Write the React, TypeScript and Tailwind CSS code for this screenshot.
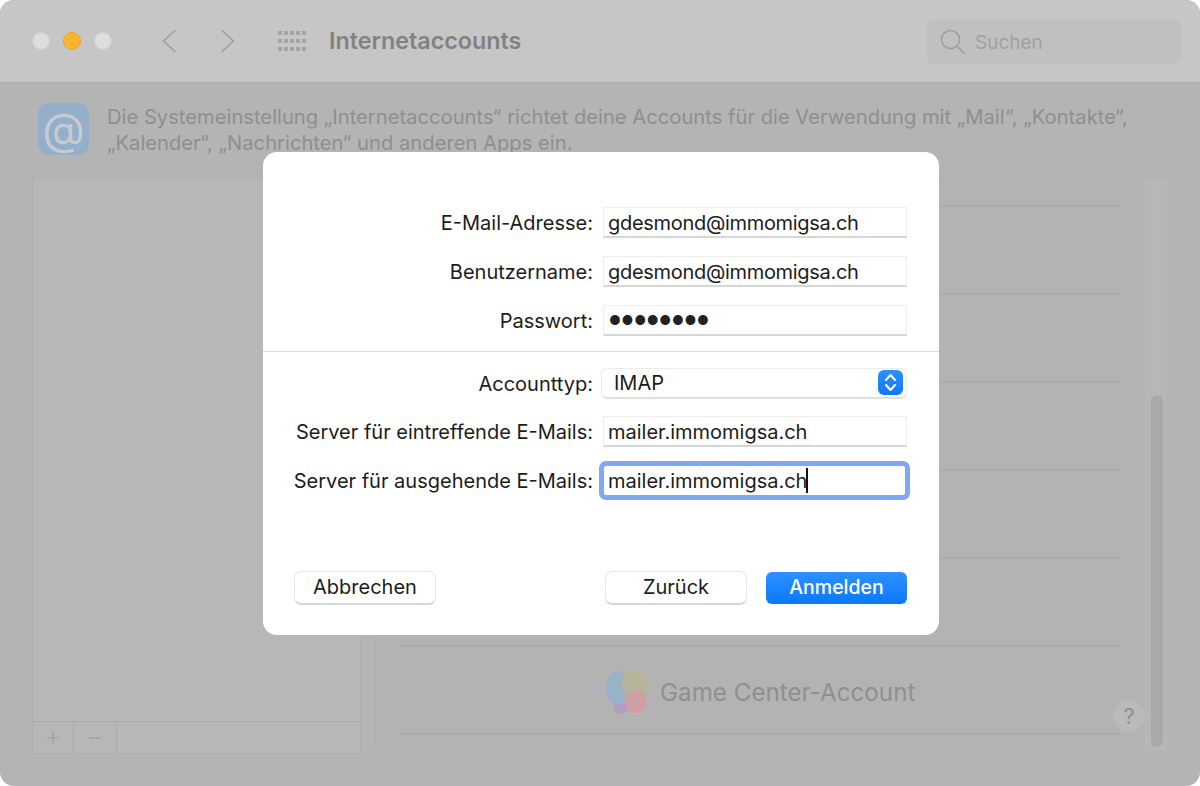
const FONT = "font-['Inter','Liberation_Sans',sans-serif]";

function TrafficLight({ color }: { color: string }) {
  return <span className={`w-[18px] h-[18px] rounded-full ${color}`} />;
}

function AppGrid() {
  return (
    <div className="grid grid-cols-5 gap-x-[2.2px] gap-y-[4px] w-[28px]">
      {Array.from({ length: 15 }).map((_, i) => (
        <span key={i} className="w-[3.8px] h-[4px] bg-[#a4a4a4]" />
      ))}
    </div>
  );
}

function TextField({ value, children, tight }: { value?: string; children?: React.ReactNode; tight?: boolean }) {
  return (
    <div className={`w-[304px] h-[31px] bg-white border border-[#eeeeee] border-b-2 border-b-[#d6d6d6] pl-[4px] pt-[1px] flex items-center text-[20px] text-[#1c1c1c] whitespace-nowrap ${tight ? "tracking-[-0.3px]" : ""}`}>
      {value}
      {children}
    </div>
  );
}

function Row({ label, children, className }: { label: string; children: React.ReactNode; className?: string }) {
  return (
    <div className={`flex items-center h-[31px] ${className ?? ""}`}>
      <label className="w-[340px] shrink-0 pr-[10px] pt-[1px] text-right text-[20px] text-[#1c1c1c] whitespace-nowrap">{label}</label>
      {children}
    </div>
  );
}

function DialogButton({ label, width, primary }: { label: string; width: string; primary?: boolean }) {
  return (
    <button
      className={
        primary
          ? `${width} h-[32px] rounded-[6px] bg-gradient-to-b from-[#2b91ff] to-[#0a78fb] text-white text-[19.5px] font-medium`
          : `${width} h-[34px] rounded-[7px] bg-white border border-[#e6e6e6] border-b-2 border-b-[#d6d6d6] text-[#1c1c1c] text-[20px] pb-[2px]`
      }
    >
      {label}
    </button>
  );
}

export default function App() {
  return (
    <div className={`relative w-[1200px] h-[786px] bg-white overflow-hidden ${FONT}`}>
      <div className="w-full h-full rounded-[14px] overflow-hidden bg-[#b4b4b4] flex flex-col">
        {/* Title bar */}
        <div className="h-[83px] shrink-0 bg-[#c6c6c6] border-b border-[#a9a9a9] flex items-center pl-[32px] pr-[19px]">
          <div className="flex items-center gap-[13px]">
            <TrafficLight color="bg-[#dedede] border border-[#cfcfcf]" />
            <TrafficLight color="bg-[#fdb42a] border border-[#e8a52a]" />
            <TrafficLight color="bg-[#dedede] border border-[#cfcfcf]" />
          </div>
          <svg className="ml-[49px] w-[16px] h-[24px]" viewBox="0 0 16 24" fill="none" stroke="#9f9f9f" strokeWidth="1.6" strokeLinecap="round" strokeLinejoin="round">
            <path d="M14 1.5L2.5 12L14 22.5" />
          </svg>
          <svg className="ml-[43px] w-[16px] h-[24px]" viewBox="0 0 16 24" fill="none" stroke="#9f9f9f" strokeWidth="1.6" strokeLinecap="round" strokeLinejoin="round">
            <path d="M2 1.5L13.5 12L2 22.5" />
          </svg>
          <div className="ml-[42px]"><AppGrid /></div>
          <span className="ml-[23px] text-[23.3px] font-semibold text-[#828282]">Internetaccounts</span>
          <div className="ml-auto w-[254px] h-[45px] rounded-[8px] bg-[#c0c0c0] flex items-center pl-[13px] gap-[10px]">
            <svg className="w-[25px] h-[25px] shrink-0" viewBox="0 0 25 25" fill="none" stroke="#9e9e9e" strokeWidth="1.5" strokeLinecap="round">
              <circle cx="10.5" cy="10.5" r="9" />
              <path d="M17 17l7 7" />
            </svg>
            <span className="text-[19px] text-[#a0a0a0] pt-[5px]">Suchen</span>
          </div>
        </div>

        {/* Intro */}
        <div className="flex pl-[38px] pt-[20px] h-[94px] shrink-0">
          <div className="w-[51px] h-[52px] rounded-[11px] bg-[#95aec9] flex items-center justify-center text-[#c6cbd0] text-[44px] leading-none shrink-0">
            @
          </div>
          <p className="ml-[18px] mt-[1px] w-[1050px] text-[20.2px] leading-[26px] text-[#8f8f8f]">
            Die Systemeinstellung „Internetaccounts“ richtet deine Accounts für die Verwendung mit „Mail“, „Kontakte“, „Kalender“, „Nachrichten“ und anderen Apps ein.
          </p>
        </div>

        {/* Panels */}
        <div className="flex pl-[32px]">
          <div className="w-[329px] h-[577px] bg-[#b7b7b7] border border-[#aeaeae] flex flex-col">
            <div className="flex-1" />
            <div className="h-[32px] border-t border-[#a9a9a9] flex items-center text-[#a4a4a4]">
              <div className="w-[41px] h-full border-r border-[#a9a9a9] flex items-center justify-center text-[26px] font-light leading-none pb-[3px]">+</div>
              <div className="w-[43px] h-full border-r border-[#a9a9a9] flex items-center justify-center text-[26px] font-light leading-none pb-[3px]">−</div>
            </div>
          </div>

          <div className="ml-[14px] w-[792px] h-[573px] border-t border-l border-[#aeaeae] bg-[#b3b3b3] flex">
            <div className="relative w-[769px] pl-[24px]">
              <div className="h-[29px] border-b-2 border-[#acacac] w-[720px]" />
              {[0, 1, 2, 3, 4].map((i) => (
                <div key={i} className="h-[88px] border-b-2 border-[#acacac] w-[720px]" />
              ))}
              <div className="h-[88px] border-b-2 border-[#acacac] w-[720px] flex items-center pl-[205px] pt-[6px]">
                <svg className="w-[44px] h-[46px] shrink-0" viewBox="0 0 44 46">
                  <ellipse cx="16.5" cy="37" rx="7.5" ry="7" fill="#b09dc0" />
                  <ellipse cx="12.5" cy="18" rx="12" ry="17" fill="#98b3c8" />
                  <ellipse cx="29" cy="14" rx="13" ry="14" fill="#b8b48e" opacity="0.75" />
                  <ellipse cx="31" cy="31.5" rx="11" ry="11.5" fill="#cfa0a3" />
                </svg>
                <span className="ml-[11px] text-[24.2px] text-[#8f8f8f] whitespace-nowrap">Game Center-Account</span>
              </div>
              <div className="absolute left-[737px] top-[522px] w-[32px] h-[32px] rounded-full bg-[#bababa] flex items-center justify-center text-[22px] text-[#8f8f8f]">
                ?
              </div>
            </div>
            <div className="w-[22px] h-[572px] bg-[#b7b7b7] flex flex-col justify-end items-center pb-[3px] pl-[2px]">
              <div className="w-[12px] h-[352px] rounded-full bg-[#a9a9a9]" />
            </div>
          </div>
        </div>
      </div>

      {/* Modal sheet */}
      <div className="absolute left-[263px] top-[152px] w-[676px] h-[483px] bg-white rounded-[14px] flex flex-col pt-[55px]">
        <div className="flex flex-col gap-[18px]">
          <Row label="E-Mail-Adresse:"><TextField value="gdesmond@immomigsa.ch" tight /></Row>
          <Row label="Benutzername:"><TextField value="gdesmond@immomigsa.ch" tight /></Row>
          <Row label="Passwort:">
            <TextField>
              <span className="text-[13px] tracking-[0.7px] text-[#222] leading-none pl-[1px] -mt-[1px]">●●●●●●●●</span>
            </TextField>
          </Row>
        </div>
        <div className="mt-[15px] border-t border-[#dcdcdc]" />
        <div className="mt-[16px]">
          <Row label="Accounttyp:">
            <div className="w-[306px] h-[31px] rounded-[6px] bg-white border border-[#ececec] border-b-2 border-b-[#e0e0e0] -ml-[2px] flex items-center pl-[12px] pr-[3px] justify-between text-[20px] text-[#1c1c1c]">
              <span>IMAP</span>
              <span className="w-[25px] h-[25px] -mt-[2px] rounded-[6px] bg-gradient-to-b from-[#2b91ff] to-[#0a78fb] flex items-center justify-center">
                <svg className="w-[13px] h-[19px]" viewBox="0 0 13 19" fill="none" stroke="white" strokeWidth="2" strokeLinecap="round" strokeLinejoin="round">
                  <path d="M2 7l4.5-5L11 7" />
                  <path d="M2 12l4.5 5L11 12" />
                </svg>
              </span>
            </div>
          </Row>
        </div>
        <div className="mt-[17px]">
          <Row label="Server für eintreffende E-Mails:"><TextField value="mailer.immomigsa.ch" /></Row>
        </div>
        <div className="mt-[18px]">
          <Row label="Server für ausgehende E-Mails:">
            <div className="w-[301px] h-[29px] ml-[1px] bg-white outline-[5px] outline-[#7ea8f0] rounded-[2px] pl-[4px] flex items-center text-[20px] text-[#1c1c1c] whitespace-nowrap">
              mailer.immomigsa.ch
              <span className="w-[1.5px] h-[25px] -ml-[1px] bg-[#111]" />
            </div>
          </Row>
        </div>
        <div className="mt-auto mb-[30px] flex items-center pl-[31px] pr-[32px]">
          <DialogButton label="Abbrechen" width="w-[142px]" />
          <div className="ml-auto flex items-center gap-[19px]">
            <DialogButton label="Zurück" width="w-[142px]" />
            <DialogButton label="Anmelden" width="w-[141px]" primary />
          </div>
        </div>
      </div>
    </div>
  );
}
